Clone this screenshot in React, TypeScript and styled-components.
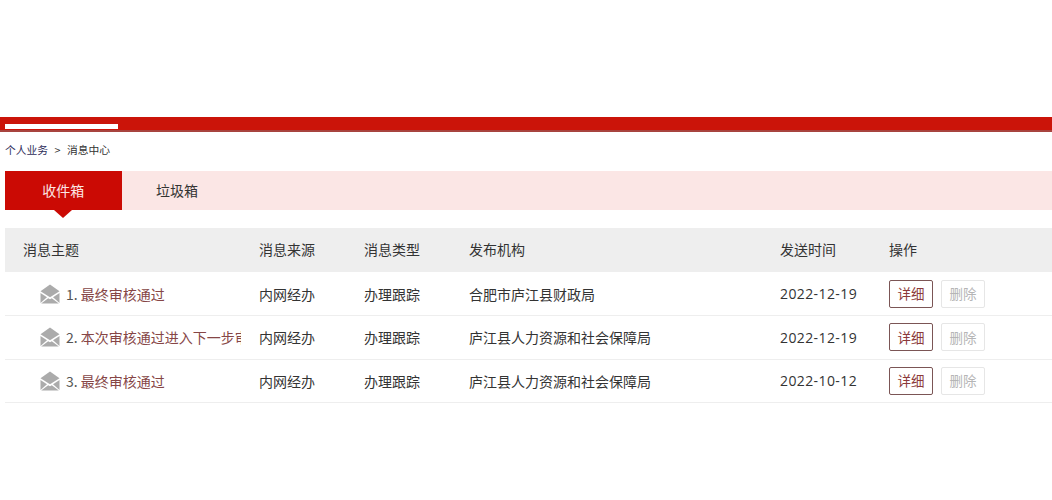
import React from "react";
import styled, { createGlobalStyle } from "styled-components";

const GlobalStyle = createGlobalStyle`
  html, body {
    margin: 0;
    padding: 0;
    background: #fff;
    overflow: hidden;
  }
  body {
    font-family: "Noto Sans CJK SC", "Open Sans", sans-serif;
    color: #333;
  }
`;

const Page = styled.div`
  width: 1052px;
  height: 500px;
  padding-top: 117px;
  box-sizing: border-box;
`;

const RedBar = styled.div`
  height: 15px;
  box-sizing: border-box;
  background: #cb1409;
  border-bottom: 2px solid #a8443f;
  padding: 7px 0 0 5px;
`;

const RedBarLine = styled.div`
  width: 113px;
  height: 5px;
  background: #fff;
`;

const Crumbs = styled.div`
  display: flex;
  align-items: center;
  height: 35px;
  padding-left: 5px;
  gap: 6.5px;
  font-size: 10.75px;
  color: #333;
`;

const CrumbLink = styled.span`
  color: #2e2d5a;
`;

const Tabs = styled.div`
  display: flex;
  height: 39px;
  margin: 4px 0 0 5px;
  background: #fbe6e5;
`;

const Tab = styled.div<{ $active?: boolean }>`
  position: relative;
  width: ${(p) => (p.$active ? "116.5px" : "auto")};
  padding: ${(p) => (p.$active ? "0 0 2px" : "0 0 2px 34.5px")};
  display: flex;
  align-items: center;
  justify-content: ${(p) => (p.$active ? "center" : "flex-start")};
  font-size: 14px;
  color: ${(p) => (p.$active ? "#fbe6e4" : "#333")};
  background: ${(p) => (p.$active ? "#cb0a04" : "transparent")};
  ${(p) =>
    p.$active
      ? `&::after {
    content: "";
    position: absolute;
    left: 49px;
    top: 100%;
    border-style: solid;
    border-width: 8px 9px 0 9px;
    border-color: #cb0a04 transparent transparent transparent;
  }`
      : ""}
`;

const Table = styled.div`
  margin: 18px 0 0 5px;
  font-size: 14px;
`;

const columns = "254px 105px 105px 311px 109px 1fr";

const HeadRow = styled.div`
  display: grid;
  grid-template-columns: ${columns};
  height: 44.3px;
  padding-bottom: 2px;
  box-sizing: border-box;
  align-items: center;
  background: #eeeeee;
  color: #333;
`;

const HeadCell = styled.div<{ $first?: boolean }>`
  padding-left: ${(p) => (p.$first ? "18px" : "0")};
`;

const Row = styled.div`
  display: grid;
  grid-template-columns: ${columns};
  height: 43.67px;
  box-sizing: border-box;
  align-items: center;
  border-bottom: 1px solid #eeeeee;
  color: #333;
`;

const SubjectCell = styled.div`
  display: flex;
  align-items: center;
  padding-left: 35px;
  overflow: hidden;
`;

const SubjectNumber = styled.span`
  color: #555;
  margin: 0 3px 0 6px;
  white-space: nowrap;
`;

const SubjectLink = styled.span`
  color: #864646;
  white-space: nowrap;
  overflow: hidden;
  width: 160px;
  flex: none;
`;

const Cell = styled.div`
  white-space: nowrap;
`;

const DateCell = styled.div`
  font-family: "Open Sans", sans-serif;
  font-size: 14px;
  letter-spacing: 0.4px;
  white-space: nowrap;
`;

const Actions = styled.div`
  display: flex;
  gap: 8px;
`;

const ActionButton = styled.button<{ $disabled?: boolean }>`
  width: 44px;
  height: 28px;
  padding: 0 0 1px;
  box-sizing: border-box;
  font-family: inherit;
  font-size: 13.5px;
  border-radius: 2px;
  background: #fff;
  color: ${(p) => (p.$disabled ? "#b5b5b5" : "#8c3a3a")};
  border: 1px solid ${(p) => (p.$disabled ? "#e6e6e6" : "#7b5555")};
`;

const MailIcon = () => (
  <svg width="20" height="20" viewBox="0 0 20 20" style={{ flex: "none" }}>
    <path d="M10 0.5 L0.5 7.2 L10 13.2 L19.5 7.2 Z" fill="#ababab" />
    <path d="M0.5 9 L7 13.2 L0.5 19 Z" fill="#ababab" />
    <path d="M19.5 9 L13 13.2 L19.5 19 Z" fill="#ababab" />
    <path d="M8.2 14.2 L10 15.3 L11.8 14.2 L18.8 19.5 L1.2 19.5 Z" fill="#ababab" />
  </svg>
);

const messages = [
  { id: 1, title: "最终审核通过", org: "合肥市庐江县财政局", date: "2022-12-19" },
  { id: 2, title: "本次审核通过进入下一步审核", org: "庐江县人力资源和社会保障局", date: "2022-12-19" },
  { id: 3, title: "最终审核通过", org: "庐江县人力资源和社会保障局", date: "2022-10-12" },
];

export default function App() {
  return (
    <Page>
      <GlobalStyle />
      <RedBar>
        <RedBarLine />
      </RedBar>
      <Crumbs>
        <CrumbLink>个人业务</CrumbLink>
        <span>&gt;</span>
        <span>消息中心</span>
      </Crumbs>
      <Tabs>
        <Tab $active>收件箱</Tab>
        <Tab>垃圾箱</Tab>
      </Tabs>
      <Table>
        <HeadRow>
          <HeadCell $first>消息主题</HeadCell>
          <HeadCell>消息来源</HeadCell>
          <HeadCell>消息类型</HeadCell>
          <HeadCell>发布机构</HeadCell>
          <HeadCell>发送时间</HeadCell>
          <HeadCell>操作</HeadCell>
        </HeadRow>
        {messages.map((m) => (
          <Row key={m.id}>
            <SubjectCell>
              <MailIcon />
              <SubjectNumber>{m.id}.</SubjectNumber>
              <SubjectLink>{m.title}</SubjectLink>
            </SubjectCell>
            <Cell>内网经办</Cell>
            <Cell>办理跟踪</Cell>
            <Cell>{m.org}</Cell>
            <DateCell>{m.date}</DateCell>
            <Actions>
              <ActionButton>详细</ActionButton>
              <ActionButton $disabled>删除</ActionButton>
            </Actions>
          </Row>
        ))}
      </Table>
    </Page>
  );
}
